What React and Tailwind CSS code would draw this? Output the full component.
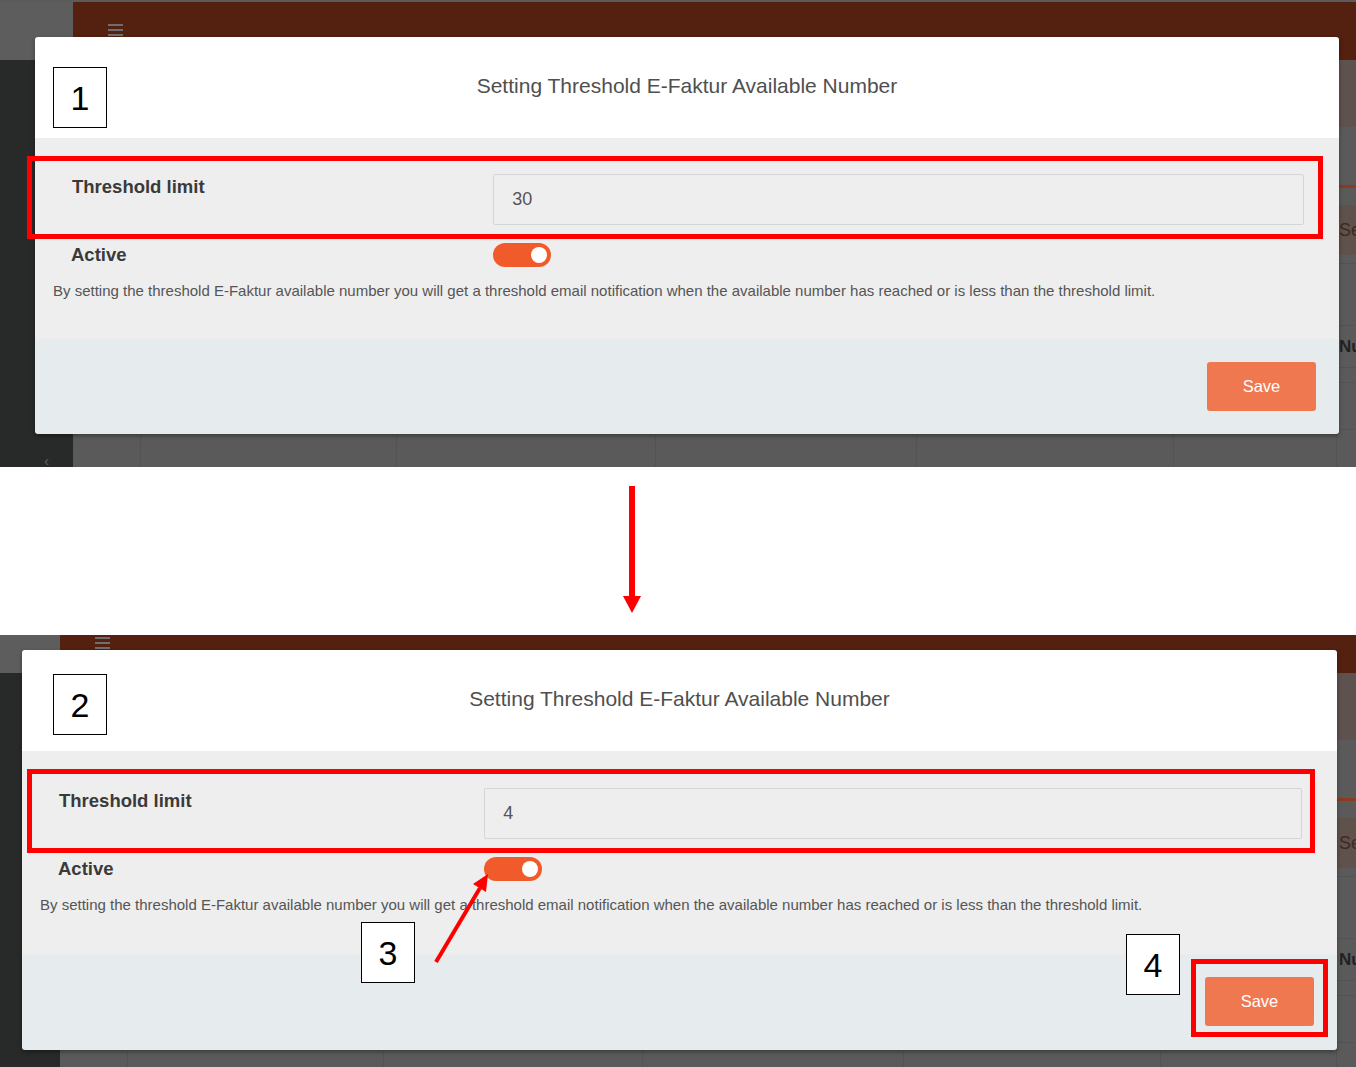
const ff = "font-['Liberation_Sans',Arial,sans-serif]";

function Hamburger() {
  return (
    <div className="flex w-[15px] flex-col gap-[3px]">
      <span className="h-[2px] bg-[#6e6e6e]" />
      <span className="h-[2px] bg-[#6e6e6e]" />
      <span className="h-[2px] bg-[#6e6e6e]" />
    </div>
  );
}

// dimmed page behind the modal
function BackPage({ sidebar, shift }) {
  const cols = 'grid grid-cols-[67px_256px_259px_261px_257px_1fr_20px]';
  return (
    <div className={`flex w-[1356px] ${shift}`}>
      <aside className={`flex shrink-0 flex-col ${sidebar}`}>
        <div className="h-[58px] shrink-0 bg-[#5d5d5d]" />
        <div className="flex-1 bg-[#282a29] pl-[44px] pt-[393px] text-[15px] leading-none text-[#5d6060]">‹</div>
      </aside>
      <div className="flex min-w-0 flex-1 flex-col bg-[#5a5a5a]">
        <header className="h-[58px] shrink-0 bg-[#54200f] pl-[35px] pt-[22px]">
          <Hamburger />
        </header>
        <div className="h-[67px] shrink-0 bg-[#5d524e]" />
        <div className="h-[58px] shrink-0" />
        <div className="h-[3px] shrink-0 bg-[#8b3b1e]" />
        <div className="mt-[17px] flex shrink-0 justify-end">
          <div className="-mr-[53px] flex h-[50px] w-[82px] shrink-0 items-center bg-[#5f514b] pl-[12px] text-[18px] text-[#3b2a22]">
            Setting
          </div>
        </div>
        <div className="mt-[8px] h-[62px] shrink-0 border-t border-[#535353]" />
        <div className={`${cols} h-[43px] shrink-0 border-t border-b border-[#535353]`}>
          <div />
          <div />
          <div />
          <div />
          <div />
          <div />
          <div className="flex items-center whitespace-nowrap pl-[3px] text-[17px] font-bold text-[#222]">Number</div>
        </div>
        <div className="h-[15px] shrink-0 border-b border-[#535353]" />
        {[0, 1, 2].map((r) => (
          <div key={r} className={`${cols} h-[47px] shrink-0 border-b border-[#535353]`}>
            <div />
            <div className="border-l border-[#535353]" />
            <div className="border-l border-[#535353]" />
            <div className="border-l border-[#535353]" />
            <div className="border-l border-[#535353]" />
            <div className="border-l border-[#535353]" />
            <div className="border-l border-[#535353]" />
          </div>
        ))}
      </div>
    </div>
  );
}

function Toggle() {
  return (
    <div className="flex h-[24px] w-[58px] items-center justify-end rounded-full bg-[#f15a2b] pr-[4px]">
      <span className="h-[16px] w-[16px] rounded-full bg-white" />
    </div>
  );
}

function Modal({ value, pos, body, foot }) {
  return (
    <div className={`absolute ${pos} overflow-hidden rounded-[3px] shadow-[0_2px_4px_rgba(0,0,0,0.35)]`}>
      <div className="flex h-[101px] items-center justify-center bg-white pb-[4px] text-[21px] text-[#4f4f4f]">
        Setting Threshold E-Faktur Available Number
      </div>
      <div className={`${body} bg-[#eeeeee] pl-[18px] pr-[35px]`}>
        <div className="grid grid-cols-[35.2%_1fr] items-start">
          <div className="pl-[19px] pt-[2px] text-[18.5px] font-bold leading-[22px] text-[#3a3a3a]">Threshold limit</div>
          <div className="flex h-[51px] items-center rounded-[2px] border border-[#d2d6d6] px-[18px] text-[18px] text-[#555]">
            {value}
          </div>
        </div>
        <div className="mt-[18px] grid grid-cols-[35.2%_1fr] items-center">
          <div className="pl-[18px] text-[18.5px] font-bold leading-[22px] text-[#3a3a3a]">Active</div>
          <Toggle />
        </div>
        <p className="mt-[14px] text-[15px] leading-[20px] text-[#555]">
          By setting the threshold E-Faktur available number you will get a threshold email notification when the available number has reached or is less than the threshold limit.
        </p>
      </div>
      <div className={`flex ${foot} items-start justify-end border-t border-[#e9ecee] bg-[#e6ebee] pr-[23px] pt-[22px]`}>
        <button className="h-[49px] w-[109px] rounded-[3px] bg-[#f07850] text-[16.5px] text-white">Save</button>
      </div>
    </div>
  );
}

function Step({ n, pos }) {
  return (
    <div className={`absolute ${pos} flex h-[61px] w-[54px] items-center justify-center border border-black bg-white text-[34px] leading-none text-black`}>
      {n}
    </div>
  );
}

export default function App() {
  return (
    <div className={`${ff} w-[1356px] overflow-hidden bg-white`}>
      {/* screenshot 1 */}
      <section className="relative h-[467px] overflow-hidden">
        <div className="h-[2px] bg-[#5b5b5b]" />
        <BackPage sidebar="w-[73px]" shift="" />
        <Modal value="30" pos="left-[35px] top-[37px] w-[1304px]" body="h-[201px] pt-[36px]" foot="h-[95px]" />
        <Step n="1" pos="left-[53px] top-[67px]" />
        <div className="absolute left-[27px] top-[156px] h-[83px] w-[1296px] border-[5px] border-[#ff0000]" />
      </section>

      {/* arrow between the two */}
      <div className="h-[168px] pl-[623px] pt-[19px]">
        <svg width="18" height="127" viewBox="0 0 18 127">
          <rect x="6" y="0" width="6" height="112" fill="#ff0000" />
          <polygon points="0,110 18,110 9,127" fill="#ff0000" />
        </svg>
      </div>

      {/* screenshot 2 */}
      <section className="relative h-[432px] overflow-hidden">
        <BackPage sidebar="w-[60px]" shift="-mt-[20px]" />
        <Modal value="4" pos="left-[22px] top-[15px] w-[1315px]" body="h-[203px] pt-[37px]" foot="h-[96px]" />
        <Step n="2" pos="left-[53px] top-[39px]" />
        <div className="absolute left-[27px] top-[134px] h-[84px] w-[1288px] border-[5px] border-[#ff0000]" />
        <Step n="3" pos="left-[361px] top-[287px]" />
        <svg className="absolute left-[430px] top-[235px]" width="64" height="100" viewBox="0 0 64 100">
          <line x1="6" y1="92" x2="50" y2="18" stroke="#ff0000" strokeWidth="4" />
          <polygon points="58,4 56,22 43,14" fill="#ff0000" />
        </svg>
        <Step n="4" pos="left-[1126px] top-[299px]" />
        <div className="absolute left-[1191px] top-[324px] h-[78px] w-[137px] border-[5px] border-[#ff0000]" />
      </section>
    </div>
  );
}
